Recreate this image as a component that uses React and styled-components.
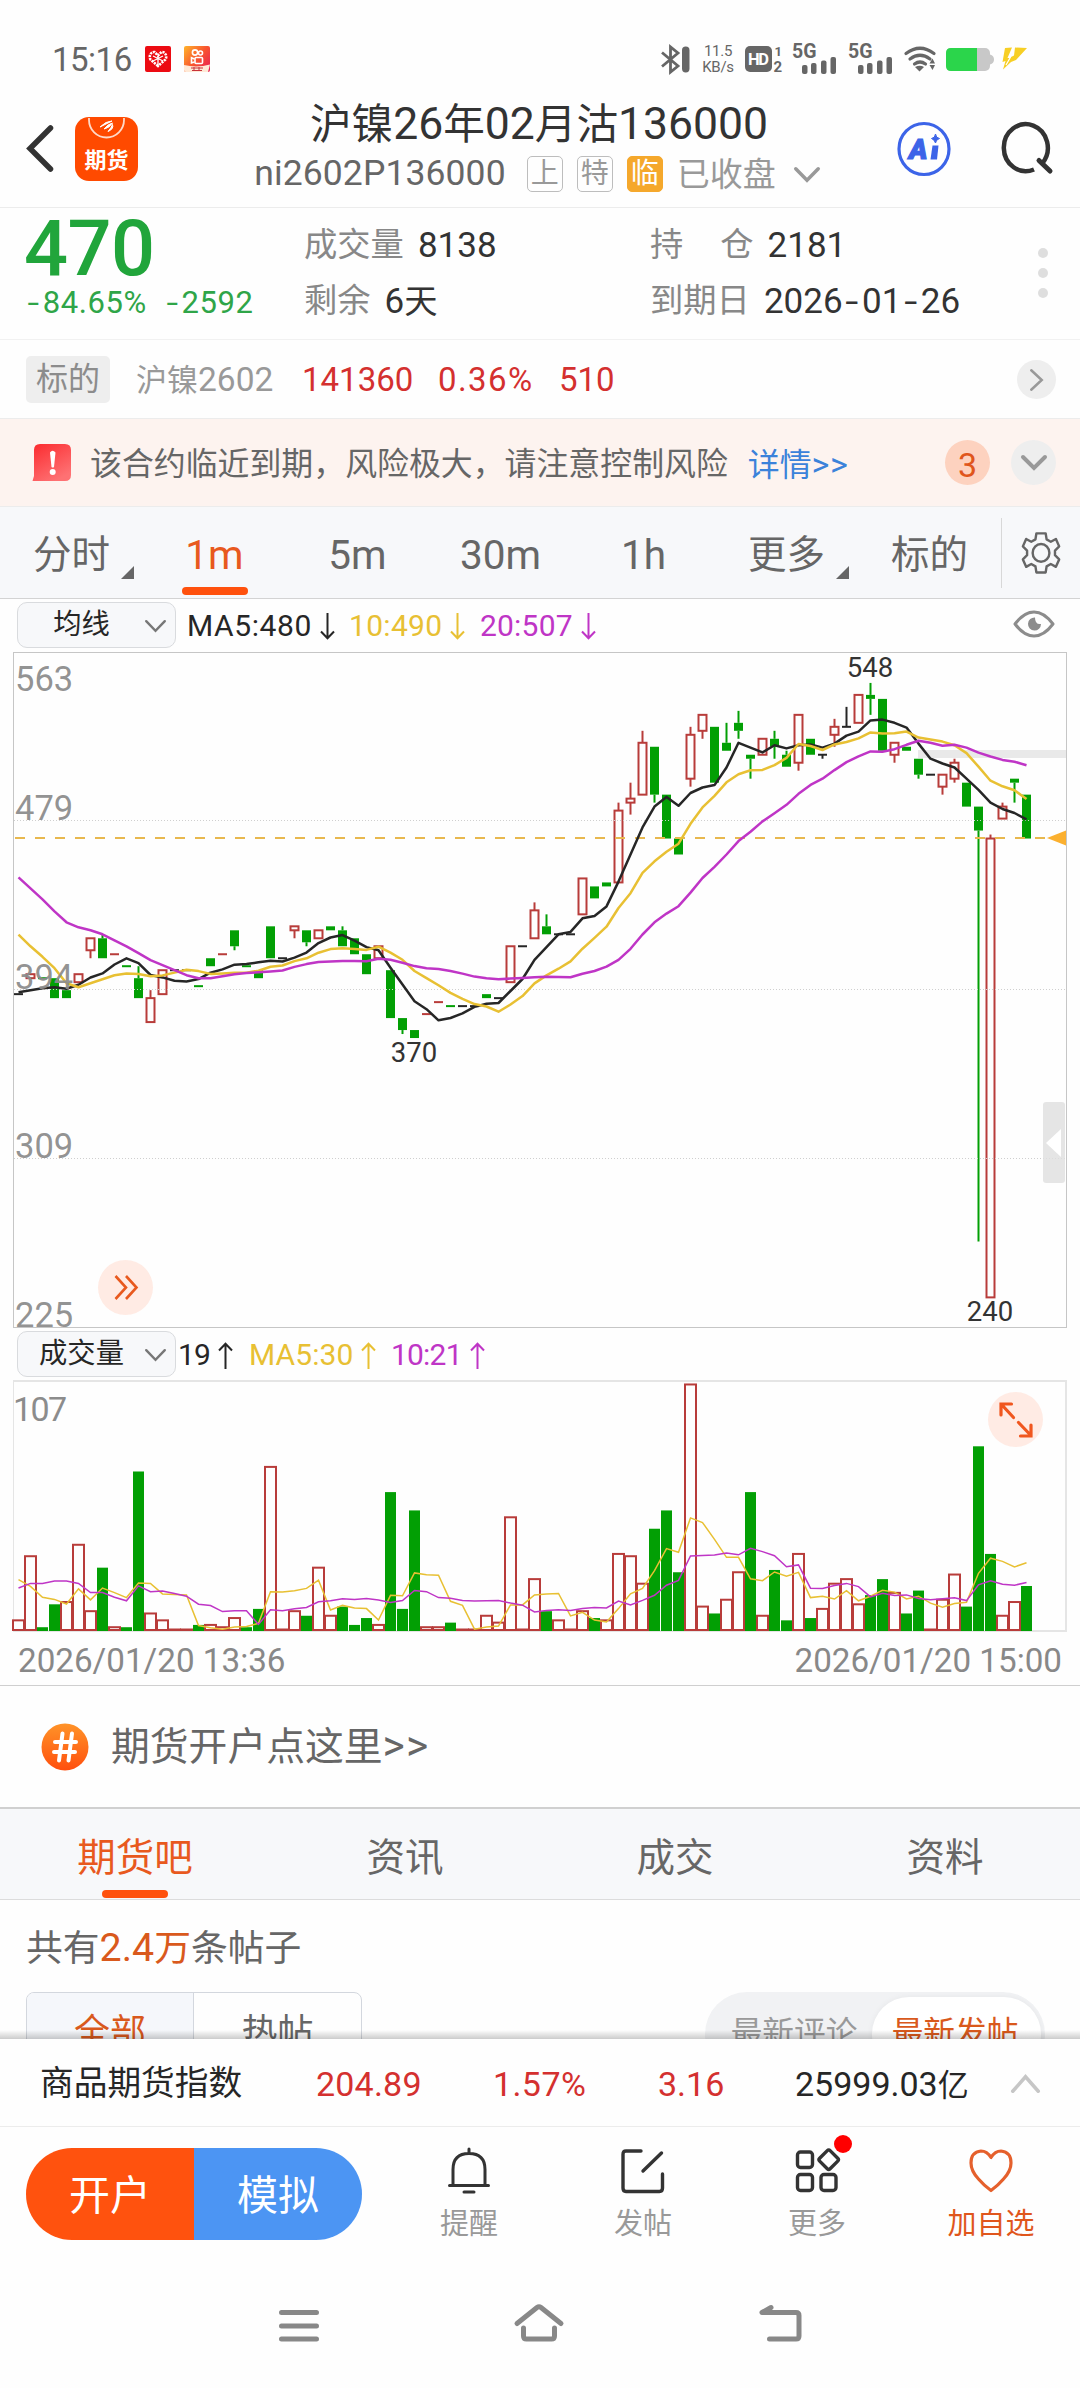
import React, { useState } from 'react'
import styled, { createGlobalStyle, css } from 'styled-components'

// [open, close, high, low]
const candles = [
  [392, 392], [400, 402], [400.3, 399.7], [400, 390], [394, 390], [398, 402], [414, 420, 420, 410], [420, 410, 422, 410],
  [411.8, 412.2], [406.3, 405.7], [400, 390, 406, 390], [378, 390, 394, 378], [392, 404], [404, 404], [404, 404], [396.3, 395.7],
  [410, 406], [411.8, 412.2], [424, 416, 424, 414], [406.3, 405.7], [404, 400], [426, 410], [410, 410], [424, 426, 426, 420],
  [424, 418, 424, 416], [420, 424], [426, 424], [424, 416, 426, 416], [420, 412], [412, 402], [410, 416], [404, 380],
  [380, 374, 380, 372], [374, 370], [381.8, 382.2], [387.8, 388.2], [386.3, 385.7], [386, 386], [386, 386], [392, 390],
  [390, 390], [398, 416], [416, 416], [420, 434, 438, 420], [426, 422, 432, 422], [422, 422], [422, 422], [432, 450],
  [446, 440], [448, 446], [448, 484, 488, 448], [488, 490, 498, 482], [492, 518, 524, 492], [516, 492, 516, 488],
  [492, 470], [470, 462], [500, 522, 526, 496], [524, 532, 532, 520], [526, 498], [518, 514, 528, 514], [528, 524, 534, 520],
  [512, 510, 512, 500], [512, 520], [520, 516, 524, 510], [512, 506, 514, 506], [508, 532, 532, 504], [520, 512],
  [512, 512, 512, 510], [522, 526, 530, 516], [526, 526, 536, 526], [528, 542], [542, 540, 548, 532], [540, 514],
  [512, 518, 518, 508], [516, 514], [510, 502, 510, 500], [502, 502], [496, 502, 502, 492], [500, 508, 510, 498],
  [498, 486], [486, 474, 486, 268], [240, 470, 472, 240], [480, 486, 488, 480], [500, 498, 500, 488], [492, 470],
]

// negative volume = falling minute
const volumes = [
  4, 32, -1, -11, 12, 37, 8, -27, 1, -1, -69, 7, 4, 0, 0, -2, 2, 1, 5, -1, -9, 71, 0, 8, -6, 27, 6, -10, -2, -5, 2, -60,
  -9, -52, 1, 1, -3, 0, 0, 6, 3, 49, 0, 22, -8, 4, 0, 8, -5, 4, 33, 32, 20, -44, -52, -25, 107, 10, -7, 13, 25, -60, 6,
  -26, -4, 33, -5, 9, 20, 22, 11, -15, -22, 16, -7, -17, 0, 13, 24, -10, -80, -33, 6, 12, -19,
]

// averages of the first minutes, which need closes from before the window
const ma5Lead = [393, 394, 395, 395.5]
const ma10Lead = [421.8, 416, 410.7, 405, 397.5, 395.5, 397.5, 399.5, 401.5]
const ma20Lead = [450.5, 445, 439.5, 433.5, 428, 425.5, 424, 422, 419, 416, 412.5, 409, 406.5, 404, 401.5, 400, 400, 401, 402]
const vol5Lead = [22.6, 19.7, 15, 14]
const vol10Lead = [19, 21, 21, 22, 22, 21, 17, 17, 15]

const RED = '#b83c3a'
const GREEN = '#029f04'
const BLACK = '#262626'
const YELLOW = '#e8c033'
const PURPLE = '#bf35c6'

const average = (list, n, lead) =>
  list.map((_, i) => (i < lead.length ? lead[i] : list.slice(i - n + 1, i + 1).reduce((a, b) => a + b, 0) / n))

const STEP = 12
const priceY = (p) => (563 - p) * 1.995
const volY = (v) => 249.5 - v * 2.29
const toPoints = (list, y) => list.map((v, i) => `${4.5 + i * STEP},${y(v).toFixed(1)}`).join(' ')

const GlobalStyle = createGlobalStyle`
  * { box-sizing: border-box; }
  body { margin: 0; background: #fefefe; }
`

const Page = styled.div`
  width: 1080px;
  height: 2388px;
  overflow: hidden;
  display: flex;
  flex-direction: column;
  background: #fefefe;
  color: #333;
  font-family: Roboto, "Noto Sans CJK SC", sans-serif;
  line-height: 1;
  white-space: nowrap;

  svg { display: block; flex: none; overflow: visible; }
`

const Num = styled.span`
  font-size: ${p => p.$size || '1.07em'};
  letter-spacing: ${p => p.$ls || 0}px;
  color: ${p => p.$color || 'inherit'};
`

const Dash = styled.span`
  display: inline-block;
  transform: scaleX(1.35);
  margin: 0 0.14em 0 ${p => (p.$lead ? '0.07em' : '0.14em')};
`

/* status bar */
const StatusBar = styled.div`
  height: 93px;
  padding: 25px 52px 0 52px;
  display: flex;
  align-items: center;
  color: #666;
  font-size: 33px;
`
const StatusLeft = styled.div`
  display: flex;
  align-items: center;
  gap: 13px;
  > span { width: 80px; letter-spacing: -0.5px; }
`
const StatusRight = styled.div`
  margin-left: auto;
  display: flex;
  align-items: center;
`
const NetSpeed = styled.div`
  width: 32px;
  margin: 0 11px 0 12px;
  font-size: 15px;
  line-height: 16px;
  text-align: center;
  letter-spacing: -0.3px;
`

/* header */
const Header = styled.header`
  height: 115px;
  display: grid;
  grid-template-columns: 150px 1fr 200px;
  border-bottom: 1px solid #ececec;
`
const HeaderLeft = styled.div`
  display: flex;
  gap: 21px;
  padding: 23px 0 0 26px;
`
const HeaderMid = styled.div`
  display: flex;
  flex-direction: column;
  align-items: center;
  padding-left: 48px;
`
const Title = styled.div`
  height: 60px;
  padding-top: 8px;
  font-size: 41.6px;
  line-height: 46px;
`
const SubTitle = styled.div`
  display: flex;
  align-items: center;
  height: 42px;
  margin: 0 4px 0 0;
  color: #666;
`
const Tag = styled.span`
  width: 36px;
  height: 36px;
  margin-right: 14px;
  display: flex;
  align-items: center;
  justify-content: center;
  font-size: 28px;
  line-height: 30px;
  border-radius: 5px;
  border: 1.5px solid ${p => (p.$solid ? '#f5a82c' : '#bdbdbd')};
  background: ${p => (p.$solid ? '#f5a82c' : 'transparent')};
  color: ${p => (p.$solid ? '#fff' : '#999')};
`
const HeaderRight = styled.div`
  display: flex;
  gap: 50px;
  padding: 28px 0 0 17px;
`

/* quote */
const Quote = styled.section`
  height: 132px;
  display: grid;
  grid-template-columns: 277px 346px 386px 1fr;
  padding-left: 27px;
  border-bottom: 1px solid #f1f1f1;
`
const Last = styled.div`
  height: 76px;
  padding-top: 3px;
  font-size: 77.5px;
  line-height: 76px;
  font-weight: 500;
  letter-spacing: -0.5px;
  margin-left: -3px;
  color: #21a53b;
`
const Change = styled.div`
  display: flex;
  gap: 19px;
  margin-top: 3px;
  font-size: 31px;
  letter-spacing: 0.6px;
  color: #2fa548;
`
const Facts = styled.dl`
  margin: 0;
  padding-top: 9px;
  display: flex;
  flex-direction: column;

  div {
    display: flex;
    align-items: center;
    gap: 14px;
    height: 56px;
    font-size: 33.3px;
  }
  dt { color: #888; }
  dd { margin: 0; color: #333; }
`
const Dots = styled.div`
  display: flex;
  flex-direction: column;
  align-items: center;
  gap: 10px;
  padding-top: 40px;
  margin-right: 30px;

  i {
    width: 10px;
    height: 10px;
    border-radius: 50%;
    background: #dedede;
  }
`

/* underlying */
const Underlying = styled.section`
  height: 79px;
  display: flex;
  align-items: center;
  padding: 0 24px 0 26px;
  border-bottom: 1px solid #ececec;
  font-size: 33px;
  color: #d4302f;

  > span { padding-top: 1px; }
`
const GreyTag = styled.span`
  width: 84px;
  height: 47px;
  margin-right: 26px;
  border-radius: 5px;
  background: #eee;
  color: #8c8c8c;
  font-size: 32px;
  line-height: 44px;
  text-align: center;
`
const Name = styled.span`
  width: 166px;
  color: #999;
  font-size: 31px;
`
const Cell = styled.span`
  width: ${p => p.$w}px;
  letter-spacing: ${p => p.$ls || 0}px;
`
const Round = styled.span`
  width: ${p => p.$d}px;
  height: ${p => p.$d}px;
  margin-left: ${p => p.$ml || 'auto'};
  border-radius: 50%;
  display: flex;
  align-items: center;
  justify-content: center;
  background: ${p => p.$bg || '#eee'};
  color: #e0561c;
  font-size: 34px;
`

/* notice */
const Notice = styled.section`
  height: 88px;
  display: flex;
  align-items: center;
  padding: 0 24px 0 32px;
  background: #fdf3ef;
  border-bottom: 1px solid #ececec;
  font-size: 31.9px;
  color: #666;

  > p { margin: 0 20px 0 18px; padding-top: 5px; }
  > a { color: #3b82da; padding-top: 4px; }
`

/* period tabs */
const Periods = styled.nav`
  height: 92px;
  display: grid;
  grid-template-columns: repeat(7, 143px) 1fr;
  background: #f7f8fa;
  border-bottom: 1px solid #d3d3d3;
`
const Period = styled.button`
  border: 0;
  padding: 5px 0 0;
  background: none;
  font: inherit;
  position: relative;
  display: flex;
  align-items: center;
  justify-content: center;
  font-size: 38.5px;
  color: ${p => (p.$active ? '#e8591e' : '#666')};

  ${p => p.$active && css`
    &::after {
      content: '';
      position: absolute;
      left: 39px;
      bottom: 3px;
      width: 66px;
      height: 8px;
      border-radius: 4px;
      background: #ff510d;
    }
  `}
  ${p => p.$more && css`
    &::after {
      content: '';
      position: absolute;
      right: 9px;
      bottom: 19px;
      border-left: 13px solid transparent;
      border-bottom: 13px solid #666;
    }
  `}
`
const Settings = styled.div`
  height: 70px;
  margin-top: 11px;
  border-left: 1px solid #d8d8d8;
  display: flex;
  align-items: center;
  justify-content: center;
`

/* charts */
const Indicator = styled.div`
  height: ${p => p.$h}px;
  padding: 3px 24px 0 17px;
  display: flex;
  align-items: flex-start;
`
const Picker = styled.button`
  width: 159px;
  height: 46px;
  margin-right: ${p => p.$mr}px;
  padding: 1px 9px 0 0;
  display: flex;
  align-items: center;
  border: 1.5px solid #d9dbde;
  border-radius: 10px;
  background: #f7f8fa;
  font: inherit;
  font-size: 28.3px;
  color: #262626;

  span { flex: 1; text-align: center; }
`
const Average = styled.span`
  width: ${p => p.$w}px;
  height: 48px;
  display: flex;
  align-items: center;
  gap: 8px;
  font-size: 30px;
  letter-spacing: ${p => p.$ls ?? 0.6}px;
  color: ${p => p.$color};
`
const ChartBox = styled.div`
  position: relative;
  width: 1054px;
  height: ${p => p.$h}px;
  margin-left: 13px;
  border: ${p => (p.$light ? '2px solid #e5e5e5' : '1px solid #c6c6c6')};
  border-left-width: 1px;

  text { font-family: Roboto, sans-serif; }
`
const FloatButton = styled.button`
  position: absolute;
  left: ${p => p.$x}px;
  top: ${p => p.$y}px;
  width: 55px;
  height: 55px;
  padding: 0;
  border: 0;
  border-radius: 50%;
  display: flex;
  align-items: center;
  justify-content: center;
  background: rgba(255, 232, 223, 0.85);
`
const DrawerHandle = styled.div`
  position: absolute;
  right: 1px;
  top: 449px;
  width: 22px;
  height: 81px;
  border-radius: 3px;
  display: flex;
  align-items: center;
  justify-content: center;
  background: rgba(222, 222, 222, 0.8);
`
const TimeRange = styled.div`
  height: 54px;
  display: flex;
  justify-content: space-between;
  padding: 12px 18px 0 18px;
  border-bottom: 1px solid #cfcfcf;
  font-size: 33.2px;
  color: #888;
`

/* banner and feed */
const Banner = styled.section`
  height: 121px;
  display: flex;
  align-items: center;
  gap: 22px;
  padding-left: 41px;
  font-size: 38.8px;
  color: #666;
`
const FeedTabs = styled.nav`
  height: 93px;
  display: grid;
  grid-template-columns: repeat(4, 1fr);
  background: #f7f8fa;
  border-top: 2px solid #d0d0d0;
  border-bottom: 1px solid #dcdcdc;
`
const FeedTab = styled(Period)`
  padding: 8px 0 0;
  &::after { left: 102px; bottom: 1px; }
`
const Feed = styled.section`
  position: relative;
  height: 139px;
  overflow: hidden;
  padding: 0 35px 0 26px;

  &::after {
    content: '';
    position: absolute;
    left: 0;
    right: 0;
    bottom: 0;
    height: 9px;
    background: linear-gradient(rgba(0, 0, 0, 0), rgba(0, 0, 0, 0.2));
  }
`
const Count = styled.p`
  margin: 0;
  height: 92px;
  padding-top: 28px;
  font-size: 36.8px;
  line-height: 40px;
  color: #666;
  b { font-weight: 400; color: #d9591c; }
`
const Filters = styled.div`
  display: flex;
  justify-content: space-between;
`
const Segment = styled.div`
  width: 336px;
  height: 84px;
  display: grid;
  grid-template-columns: 1fr 1fr;
  border: 1.5px solid #d3d7de;
  border-radius: 8px;
  font-size: 36px;
  line-height: 81px;
  text-align: center;
  color: #666;

  span:first-child {
    background: #f5f7fb;
    border-right: 1.5px solid #d3d7de;
    border-radius: 7px 0 0 7px;
    color: #d9591c;
  }
`
const Toggle = styled.div`
  width: 340px;
  height: 84px;
  padding: 5px 4px;
  display: grid;
  grid-template-columns: 1fr 169px;
  border-radius: 42px;
  background: #f1f2f4;
  font-size: 31.7px;
  line-height: 73px;
  text-align: center;
  color: #999;

  span:last-child {
    border-radius: 37px;
    background: #fff;
    color: #d9591c;
    box-shadow: 0 0 6px rgba(0, 0, 0, 0.05);
    padding-right: 3px;
  }
  span:first-child { padding-left: 7px; }
`

/* bottom */
const IndexBar = styled.section`
  height: 88px;
  display: flex;
  align-items: center;
  padding: 3px 40px 0 40px;
  border-bottom: 1px solid #ececec;
  font-size: 34px;
  color: #d4302f;

  > svg { margin-left: auto; }
`
const IndexName = styled.span`
  width: 276px;
  font-size: 33.7px;
  color: #262626;
`
const Amount = styled.span`
  font-size: 34px;
  color: #262626;
  small { font-size: 31px; }
`
const Actions = styled.section`
  height: 134px;
  display: flex;
  padding: 21px 0 0 26px;
`
const Trade = styled.div`
  width: 336px;
  height: 92px;
  margin-right: 20px;
  display: grid;
  grid-template-columns: 1fr 1fr;
  border-radius: 46px;
  overflow: hidden;
  font-size: 41px;
  line-height: 96px;
  text-align: center;
  color: #fff;

  span:first-child { background: #ff520e; }
  span:last-child { background: #4c95f3; }
`
const Action = styled.div`
  position: relative;
  width: 174px;
  display: flex;
  flex-direction: column;
  align-items: center;
  gap: 16px;
  font-size: 29px;
  color: ${p => (p.$hot ? '#e0561c' : '#999')};
`
const Badge = styled.i`
  position: absolute;
  left: 104px;
  top: -13px;
  width: 18px;
  height: 18px;
  border-radius: 50%;
  background: #f00;
`
const SystemNav = styled.nav`
  flex: 1;
  display: flex;
  justify-content: center;
  gap: 192px;
  padding-top: 39px;
`

const Chevron = ({ w, h, stroke, color, dir }) => {
  const m = stroke / 2
  const pts = {
    down: `${m},${m} ${w / 2},${h - m} ${w - m},${m}`,
    up: `${m},${h - m} ${w / 2},${m} ${w - m},${h - m}`,
    right: `${m},${m} ${w - m},${h / 2} ${m},${h - m}`,
    left: `${w - m},${m} ${m},${h / 2} ${w - m},${h - m}`,
  }[dir]
  return (
    <svg width={w} height={h}>
      <polyline points={pts} fill="none" stroke={color} strokeWidth={stroke} strokeLinecap="round" />
    </svg>
  )
}

const Arrow = ({ up }) => (
  <svg width="15" height="27" viewBox="0 0 15 27" transform={up ? 'rotate(180)' : undefined}>
    <path d="M7.5 0V25M1 18.5L7.5 25.3L14 18.5" fill="none" stroke="currentColor" strokeWidth="2" />
  </svg>
)

const RedPacketIcon = () => (
  <svg width="26" height="26" viewBox="0 0 26 26">
    <rect width="26" height="26" rx="2" fill="#ec0b12" />
    <path d="M13 20L5.5 13.5C3.5 10 6 5.5 9.500 6L13 9.500L16.500 6C20 5.500 22.500 10 20.500 13.500Z" fill="none" stroke="#fff" strokeWidth="2.600" strokeDasharray="2.200 0.900" />
    <path d="M8 10L18 15M18 10L8 15M13 10V20" stroke="#fff" strokeWidth="1.300" />
  </svg>
)

const VideoIcon = () => (
  <svg width="26" height="26" viewBox="0 0 26 26">
    <defs>
      <linearGradient id="video" x1="0" y1="0" x2="1" y2="0.8">
        <stop offset="0" stopColor="#ffb52a" />
        <stop offset="0.55" stopColor="#f8552f" />
        <stop offset="1" stopColor="#ea2450" />
      </linearGradient>
    </defs>
    <rect width="26" height="26" rx="2" fill="url(#video)" />
    <path d="M0 19Q13 22 26 18.500L24 26H2Q0 26 0 24Z" fill="#ffe9d6" />
    <g fill="none" stroke="#fff" strokeWidth="1.600">
      <circle cx="11" cy="6.500" r="2.600" />
      <circle cx="16.500" cy="7" r="2" />
      <rect x="11" y="11.500" width="7.500" height="6" rx="1" />
      <path d="M10.500 13L7.500 11.800V17L10.500 16" />
    </g>
    <path d="M7 22H19M8 24.500H18M10 21V25M15 21V25" stroke="#c8323a" strokeWidth="1" />
  </svg>
)

const Signal = () => (
  <svg width="45" height="32" viewBox="0 0 45 32">
    <text x="0" y="15" fontSize="19.500" fontWeight="700" fill="#666" fontFamily="Roboto, sans-serif">5G</text>
    <g fill="#666">
      <rect x="10" y="22" width="5.500" height="9" rx="2" />
      <rect x="19" y="20" width="5.500" height="11" rx="2" />
      <rect x="29" y="17.500" width="5.500" height="13.500" rx="2" />
      <rect x="38.500" y="14" width="5.500" height="17" rx="2" />
    </g>
  </svg>
)

const StatusIcons = () => (
  <StatusRight>
    <svg width="29" height="27" viewBox="0 0 29 27">
      <path d="M1 6.500L17 20L9.500 26V1L17 7L1 20.500" fill="none" stroke="#666" strokeWidth="2.800" />
      <rect x="21" y="0.500" width="7.500" height="26" rx="3.700" fill="#666" />
    </svg>
    <NetSpeed>11.5<br />KB/s</NetSpeed>
    <svg width="38" height="28" viewBox="0 0 38 28">
      <rect x="0" y="1" width="27" height="26" rx="5" fill="#666" />
      <text x="3" y="20" fontSize="16.500" fontWeight="700" fill="#fff" fontFamily="Roboto, sans-serif" textLength="21">HD</text>
      <text x="29.500" y="11" fontSize="13" fontWeight="700" fill="#666" fontFamily="Roboto, sans-serif">1</text>
      <text x="28.500" y="26.500" fontSize="15" fontWeight="700" fill="#666" fontFamily="Roboto, sans-serif">2</text>
    </svg>
    <svg width="9" height="1" /><Signal />
    <svg width="11" height="1" /><Signal />
    <svg width="44" height="26" viewBox="0 0 44 26">
      <g fill="none" stroke="#666" strokeWidth="3.200" strokeLinecap="round" transform="translate(11 1)">
        <path d="M2 6.500Q16 -4 30 6.500" />
        <path d="M6 12Q16 4.500 26 12" />
        <path d="M10.500 17Q16 13 21.500 17" />
      </g>
      <path d="M22 21Q27 18.500 31 21L26.500 25.500Z" fill="#666" />
      <path d="M36.500 17.500H42L39.500 12.500ZM36.500 19H42L39.500 24Z" fill="#666" />
    </svg>
    <svg width="57" height="26" viewBox="0 0 57 26">
      <rect x="9" y="2" width="44" height="23" rx="5" fill="#c8c8c8" />
      <path d="M14 2H40V25H14Q9 25 9 20V7Q9 2 14 2Z" fill="#2bd54b" />
      <path d="M53 8.500Q57 9.500 57 13.500T53 18.500Z" fill="#c8c8c8" />
    </svg>
    <svg width="34" height="26" viewBox="0 0 34 26">
      <path d="M11 2L18 1.500L13.500 12H18.500L9 23.500L11.500 15L8.500 16Z" fill="#f7cf25" />
      <path d="M21 1.500L33 2L22 14L17 16L9 23.500L17 11L20 9.500Z" fill="#f7cf25" />
      <path d="M19 2L16 12L12 19" stroke="#fff" strokeWidth="1.200" fill="none" />
    </svg>
  </StatusRight>
)

const AppIcon = () => (
  <svg width="63" height="65" viewBox="0 0 63 65">
    <rect y="1" width="63" height="64" rx="14" fill="#ff4a00" />
    <path d="M14 2V4A17.500 17.500 0 0 0 49 4V2" fill="none" stroke="#ffd9c8" strokeWidth="1.800" />
    <path d="M25 11Q31 5 37 5Q31 8 25 11ZM29 13Q33 8 37.500 7Q34.500 12 29 13ZM33 15.500Q36.500 11.500 37.500 8.500Q39 13 33 15.500Z" fill="#fff" stroke="#fff" strokeWidth="1" />
    <text x="31.500" y="51.500" textAnchor="middle" fontSize="22" fontWeight="700" fill="#fff" fontFamily='"Noto Sans CJK SC", sans-serif'>期货</text>
  </svg>
)

const AiIcon = () => (
  <svg width="54" height="56" viewBox="0 0 54 56">
    <ellipse cx="27" cy="28" rx="25" ry="25.500" fill="none" stroke="#3c64e8" strokeWidth="3.200" />
    <text x="12" y="38" fontSize="28" fontWeight="900" fontStyle="italic" fill="#3c64e8" stroke="#3c64e8" strokeWidth="1.200" fontFamily="Roboto, sans-serif">A</text>
    <path d="M35.500 24.500H41.500L40 38.500H33.500Z" fill="#3c64e8" />
    <path d="M38.500 13Q39 17 42.500 17.500Q39 18.500 38.500 22Q37.500 18.500 34.500 17.500Q38 17 38.500 13Z" fill="#3c64e8" stroke="#3c64e8" />
  </svg>
)

const SearchIcon = () => (
  <svg width="52" height="54" viewBox="0 0 52 54">
    <path d="M33 48.500A22 23.500 0 1 1 41.500 42" fill="none" stroke="#333" strokeWidth="4.500" />
    <path d="M38 39.500L49 50" stroke="#333" strokeWidth="5" strokeLinecap="round" />
  </svg>
)

const AlertIcon = () => (
  <svg width="40" height="39" viewBox="0 0 40 39">
    <defs>
      <linearGradient id="alert" x1="0" y1="0" x2="0.6" y2="1">
        <stop offset="0" stopColor="#fb2a2e" />
        <stop offset="1" stopColor="#fe7173" />
      </linearGradient>
    </defs>
    <path d="M8 1H33Q39 1 39 7V32Q39 38 33 38H0.500L2 33V7Q2 1 8 1Z" fill="url(#alert)" />
    <path d="M18 9.500Q20.500 6 23.500 9.500L22 24Q20.700 25 19.500 24Z" fill="#fff" />
    <circle cx="20.700" cy="29" r="3" fill="#fff" />
  </svg>
)

const GearIcon = () => (
  <svg width="42" height="46" viewBox="0 0 42 46">
    <g fill="none" stroke="#666" strokeWidth="2.600" strokeLinejoin="round" transform="translate(1.500 1.500) scale(0.93)">
      <path d="M16 2H26L27 8.500L31.500 11L37 8L40.500 16L36 20.500V25.500L40.500 30L37 38L31.500 35L27 37.500L26 44H16L15 37.500L10.500 35L5 38L1.500 30L6 25.500V20.500L1.500 16L5 8L10.500 11L15 8.500Z" />
      <ellipse cx="21" cy="23" rx="9" ry="9.500" />
    </g>
  </svg>
)

const EyeIcon = () => (
  <svg width="42" height="28" viewBox="0 0 42 28">
    <path d="M2 14Q11 2 21 2T40 14Q31 26 21 26T2 14Z" fill="none" stroke="#8c8c8c" strokeWidth="3" strokeLinejoin="round" />
    <path d="M22 7.500A6.500 6.500 0 1 0 28 14Q22 15 22 7.500Z" fill="#8c8c8c" />
  </svg>
)

const Candle = ({ i, data }) => {
  const [open, close, high = Math.max(open, close), low = Math.min(open, close)] = data
  const x = i * STEP
  const top = priceY(Math.max(open, close))
  const bottom = priceY(Math.min(open, close))
  const color = close > open ? RED : close < open ? GREEN : BLACK
  return (
    <g stroke={color} strokeWidth="2">
      {priceY(high) < top && <line x1={x + 4.5} x2={x + 4.5} y1={priceY(high)} y2={top} />}
      {priceY(low) > bottom && <line x1={x + 4.5} x2={x + 4.5} y1={bottom} y2={priceY(low)} />}
      {bottom - top < 2
        ? <line x1={x} x2={x + 9} y1={(top + bottom) / 2} y2={(top + bottom) / 2} />
        : close > open
          ? <rect x={x + 0.5} y={top} width="8" height={bottom - top} fill="#fefefe" />
          : <rect x={x} y={top} width="9" height={bottom - top} fill={color} stroke="none" />}
    </g>
  )
}

const PriceChart = () => {
  const closes = candles.map(c => c[1])
  return (
    <ChartBox $h={676}>
      <svg width="1052" height="674">
        <rect x="904" y="97" width="148" height="8" fill="#e9e9e9" />
        {candles.map((c, i) => <Candle key={i} i={i} data={c} />)}
        {[167.5, 336.5, 505.5].map(y => (
          <line key={y} x1="0" x2="1052" y1={y} y2={y} stroke="#cfcfcf" strokeWidth="1" strokeDasharray="1 2" />
        ))}
        <line x1="1" x2="1032" y1="185" y2="185" stroke="#e8b84e" strokeWidth="2.200" strokeDasharray="10 10" />
        <path d="M1033 185L1052 177.500V192.500Z" fill="#fbb02f" />
        <g fill="none" strokeWidth="2.500" strokeLinejoin="round">
          <polyline points={toPoints(average(closes, 5, ma5Lead), priceY)} stroke={BLACK} />
          <polyline points={toPoints(average(closes, 10, ma10Lead), priceY)} stroke={YELLOW} />
          <polyline points={toPoints(average(closes, 20, ma20Lead), priceY)} stroke={PURPLE} />
        </g>
        <g fontSize="34.500" fill="#8c8c8c" fillOpacity="0.95">
          <text x="1" y="37.500">563</text>
          <text x="1" y="167">479</text>
          <text x="1" y="336">394</text>
          <text x="1" y="505">309</text>
          <text x="1" y="674">225</text>
        </g>
        <g fontSize="27.500" fill="#333" textAnchor="middle">
          <text x="856" y="24">548</text>
          <text x="400" y="409">370</text>
          <text x="976" y="668">240</text>
        </g>
      </svg>
      <FloatButton $x={84} $y={607}>
        <svg width="24" height="25" viewBox="0 0 24 25">
          <path d="M1.500 1L12 12.500L1.500 24M12 1L22.500 12.500L12 24" fill="none" stroke="#e8591e" strokeWidth="2.600" />
        </svg>
      </FloatButton>
      <DrawerHandle>
        <svg width="16" height="28"><path d="M0 14L15 0V28Z" fill="#fff" /></svg>
      </DrawerHandle>
    </ChartBox>
  )
}

const VolumeChart = () => {
  const amounts = volumes.map(Math.abs)
  return (
    <ChartBox $h={252} $light>
      <svg width="1051" height="249">
        {volumes.map((v, i) => {
          const x = i * STEP - 1
          const y = volY(Math.abs(v)) - 2
          return v < 0
            ? <rect key={i} x={x} y={y} width="11" height={249 - y} fill={GREEN} />
            : <rect key={i} x={x} y={y} width="11" height={Math.max(248 - y, 0.5)} fill="#fefefe" stroke={RED} strokeWidth="2" />
        })}
        <g fill="none" strokeWidth="1.500">
          <polyline points={toPoints(average(amounts, 5, vol5Lead), volY)} stroke={YELLOW} />
          <polyline points={toPoints(average(amounts, 10, vol10Lead), volY)} stroke={PURPLE} />
        </g>
        <text x="-1" y="38.500" fontSize="34" fill="#8c8c8c" textLength="54">107</text>
      </svg>
      <FloatButton $x={974} $y={10}>
        <svg width="34" height="36" viewBox="0 0 34 36">
          <g fill="none" stroke="#f0571f" strokeWidth="3.200" strokeLinecap="round">
            <path d="M14.500 15.500L3 3M2 13V2H12.500" />
            <path d="M19.500 20.500L31 32.500M21.500 34H32V23" />
          </g>
        </svg>
      </FloatButton>
    </ChartBox>
  )
}

const periods = [
  { key: '分时', more: true },
  { key: '1m', num: true },
  { key: '5m', num: true },
  { key: '30m', num: true },
  { key: '1h', num: true },
  { key: '更多', more: true },
  { key: '标的' },
]

const App = () => {
  const [period, setPeriod] = useState('1m')
  const [feed, setFeed] = useState('期货吧')

  return (
    <Page>
      <GlobalStyle />
      <StatusBar>
        <StatusLeft>
          <span>15:16</span>
          <RedPacketIcon />
          <VideoIcon />
        </StatusLeft>
        <StatusIcons />
      </StatusBar>

      <Header>
        <HeaderLeft>
          <svg width="28" height="66" viewBox="0 0 28 66">
            <path d="M24.500 12L4 32.500L24.500 53" fill="none" stroke="#333" strokeWidth="5.500" strokeLinecap="round" />
          </svg>
          <AppIcon />
        </HeaderLeft>
        <HeaderMid>
          <Title>沪镍<Num>26</Num>年<Num>02</Num>月沽<Num>136000</Num></Title>
          <SubTitle>
            <Num $size="35.5px" $ls={0.1}>ni2602P136000</Num>
            <svg width="21" height="1" />
            <Tag>上</Tag>
            <Tag>特</Tag>
            <Tag $solid>临</Tag>
            <Num $size="33px" $color="#999">已收盘</Num>
            <svg width="18" height="1" />
            <Chevron w={26} h={15} stroke={3.5} color="#999" dir="down" />
          </SubTitle>
        </HeaderMid>
        <HeaderRight>
          <AiIcon />
          <SearchIcon />
        </HeaderRight>
      </Header>

      <Quote>
        <div>
          <Last>470</Last>
          <Change>
            <span><Dash $lead>-</Dash>84.65%</span>
            <span><Dash $lead>-</Dash>2592</span>
          </Change>
        </div>
        <Facts>
          <div><dt>成交量</dt><dd><Num $size="35px">8138</Num></dd></div>
          <div><dt>剩余</dt><dd><Num $size="35px">6</Num>天</dd></div>
        </Facts>
        <Facts>
          <div><dt>持<svg width="37" height="1" style={{ display: 'inline-block' }} />仓</dt><dd><Num $size="35px">2181</Num></dd></div>
          <div><dt>到期日</dt><dd><Num $size="35px">2026<Dash>-</Dash>01<Dash>-</Dash>26</Num></dd></div>
        </Facts>
        <Dots><i /><i /><i /></Dots>
      </Quote>

      <Underlying>
        <GreyTag>标的</GreyTag>
        <Name>沪镍<Num $size="33.5px">2602</Num></Name>
        <Cell $w={136}>141360</Cell>
        <Cell $w={121} $ls={1.4}>0.36%</Cell>
        <Cell $w={60}>510</Cell>
        <Round $d={39}><Chevron w={13} h={22} stroke={2.5} color="#999" dir="right" /></Round>
      </Underlying>

      <Notice>
        <AlertIcon />
        <p>该合约临近到期，风险极大，请注意控制风险</p>
        <a>详情<Num $ls={0.5}>&gt;&gt;</Num></a>
        <Round $d={45} $bg="#fdd2bf"><span style={{ paddingTop: 4 }}>3</span></Round>
        <Round $d={45} $ml="21px"><Chevron w={26} h={15} stroke={4} color="#999" dir="down" /></Round>
      </Notice>

      <Periods>
        {periods.map(p => (
          <Period key={p.key} $active={p.key === period} $more={p.more} onClick={() => setPeriod(p.key)}>
            {p.num ? <Num $size="40.5px">{p.key}</Num> : p.key}
          </Period>
        ))}
        <Settings><GearIcon /></Settings>
      </Periods>

      <Indicator $h={53}>
        <Picker $mr={11}><span>均线</span><Chevron w={21} h={12} stroke={2.4} color="#777" dir="down" /></Picker>
        <Average $w={162} $color={BLACK}>MA5:480<Arrow /></Average>
        <Average $w={131} $ls={0.3} $color={YELLOW}>10:490<Arrow /></Average>
        <Average $w={120} $ls={0.2} $color={PURPLE}>20:507<Arrow /></Average>
        <Round as="div" $d={44} $bg="transparent"><EyeIcon /></Round>
      </Indicator>
      <PriceChart />

      <Indicator $h={52}>
        <Picker $mr={2}><span>成交量</span><Chevron w={21} h={12} stroke={2.4} color="#777" dir="down" /></Picker>
        <Average $w={71} $ls={-0.8} $color={BLACK}>19<Arrow up /></Average>
        <Average $w={142} $ls={0.1} $color={YELLOW}>MA5:30<Arrow up /></Average>
        <Average $w={120} $ls={-0.8} $color={PURPLE}>10:21<Arrow up /></Average>
      </Indicator>
      <VolumeChart />
      <TimeRange>
        <span>2026/01/20 13:36</span>
        <span>2026/01/20 15:00</span>
      </TimeRange>

      <Banner>
        <svg width="48" height="48" viewBox="0 0 48 48">
          <defs>
            <linearGradient id="topic" x1="0" y1="0" x2="0" y2="1">
              <stop offset="0" stopColor="#ff9328" />
              <stop offset="1" stopColor="#ff4f0e" />
            </linearGradient>
          </defs>
          <circle cx="24" cy="24" r="23.500" fill="url(#topic)" />
          <path d="M21.500 10.500L18 37.500M31 10.500L27.500 37.500M14 19H35M13 29H34" stroke="#fff" strokeWidth="4" strokeLinecap="round" />
        </svg>
        <span>期货开户点这里<Num $size="42.5px" $ls={1.2}>&gt;&gt;</Num></span>
      </Banner>

      <FeedTabs>
        {['期货吧', '资讯', '成交', '资料'].map(name => (
          <FeedTab key={name} $active={name === feed} onClick={() => setFeed(name)}>{name}</FeedTab>
        ))}
      </FeedTabs>

      <Feed>
        <Count>共有<b><Num>2.4</Num>万</b>条帖子</Count>
        <Filters>
          <Segment><span>全部</span><span>热帖</span></Segment>
          <Toggle><span>最新评论</span><span>最新发帖</span></Toggle>
        </Filters>
      </Feed>

      <IndexBar>
        <IndexName>商品期货指数</IndexName>
        <Cell $w={177} $ls={0.2}>204.89</Cell>
        <Cell $w={165} $ls={0.4}>1.57%</Cell>
        <Cell $w={137}>3.16</Cell>
        <Amount>25999.03<small>亿</small></Amount>
        <Chevron w={29} h={18} stroke={3.5} color="#c6c6c6" dir="up" />
      </IndexBar>

      <Actions>
        <Trade><span>开户</span><span>模拟</span></Trade>
        <Action>
          <svg width="42" height="46" viewBox="0 0 42 46">
            <path d="M21 1V5M5 37V21.500Q5 5.500 21 5.500T37 21.500V37M1.500 37.500H40.500M16 44H26" fill="none" stroke="#333" strokeWidth="3" strokeLinecap="round" />
          </svg>
          提醒
        </Action>
        <Action>
          <svg width="44" height="46" viewBox="0 0 44 46">
            <path d="M20 3H5Q2 3 2 6.500V40Q2 43.500 5 43.500H38.500Q41.500 43.500 41.500 40V26M22 23L40.500 5" fill="none" stroke="#333" strokeWidth="3.400" strokeLinecap="round" />
          </svg>
          发帖
        </Action>
        <Action>
          <svg width="44" height="46" viewBox="0 0 44 46">
            <g fill="none" stroke="#333" strokeWidth="3.400">
              <rect x="2.500" y="4" width="15" height="15.500" rx="3" />
              <rect x="2.500" y="26.500" width="15" height="16" rx="3" />
              <rect x="26" y="26.500" width="15" height="16" rx="3" />
              <rect x="26.300" y="4.300" width="14.800" height="14.800" rx="2" transform="rotate(45 33.700 11.700)" />
            </g>
          </svg>
          更多
          <Badge />
        </Action>
        <Action $hot>
          <svg width="44" height="46" viewBox="0 0 44 46">
            <path d="M22 9.500Q18 3 12 3Q2 4 2 15Q2 23 9.500 31Q15 37.500 22 42.500Q29 37.500 34.500 31Q42 23 42 15Q42 4 32 3Q26 3 22 9.500Z" fill="none" stroke="#e5602c" strokeWidth="3.200" strokeLinejoin="round" />
          </svg>
          加自选
        </Action>
      </Actions>

      <SystemNav>
        <svg width="40" height="50" viewBox="0 0 40 50">
          <path d="M2.500 12.500H37.500M2.500 26H37.500M2.500 39H37.500" stroke="#888" strokeWidth="5" strokeLinecap="round" />
        </svg>
        <svg width="56" height="50" viewBox="0 0 56 50">
          <path d="M6 23.500L26 7.500Q28 6 30 7.500L50 23.500M12.500 28V36Q12.500 39 15.500 39H40.500Q43.500 39 43.500 36V28" fill="none" stroke="#888" strokeWidth="5" strokeLinecap="round" />
        </svg>
        <svg width="43" height="50" viewBox="0 0 43 50">
          <path d="M12 7.500L3 12.500H37Q40 12.500 40 15.500V36Q40 39 37 39H10.500" fill="none" stroke="#888" strokeWidth="5" strokeLinecap="round" strokeLinejoin="round" />
        </svg>
      </SystemNav>
    </Page>
  )
}

export default App
